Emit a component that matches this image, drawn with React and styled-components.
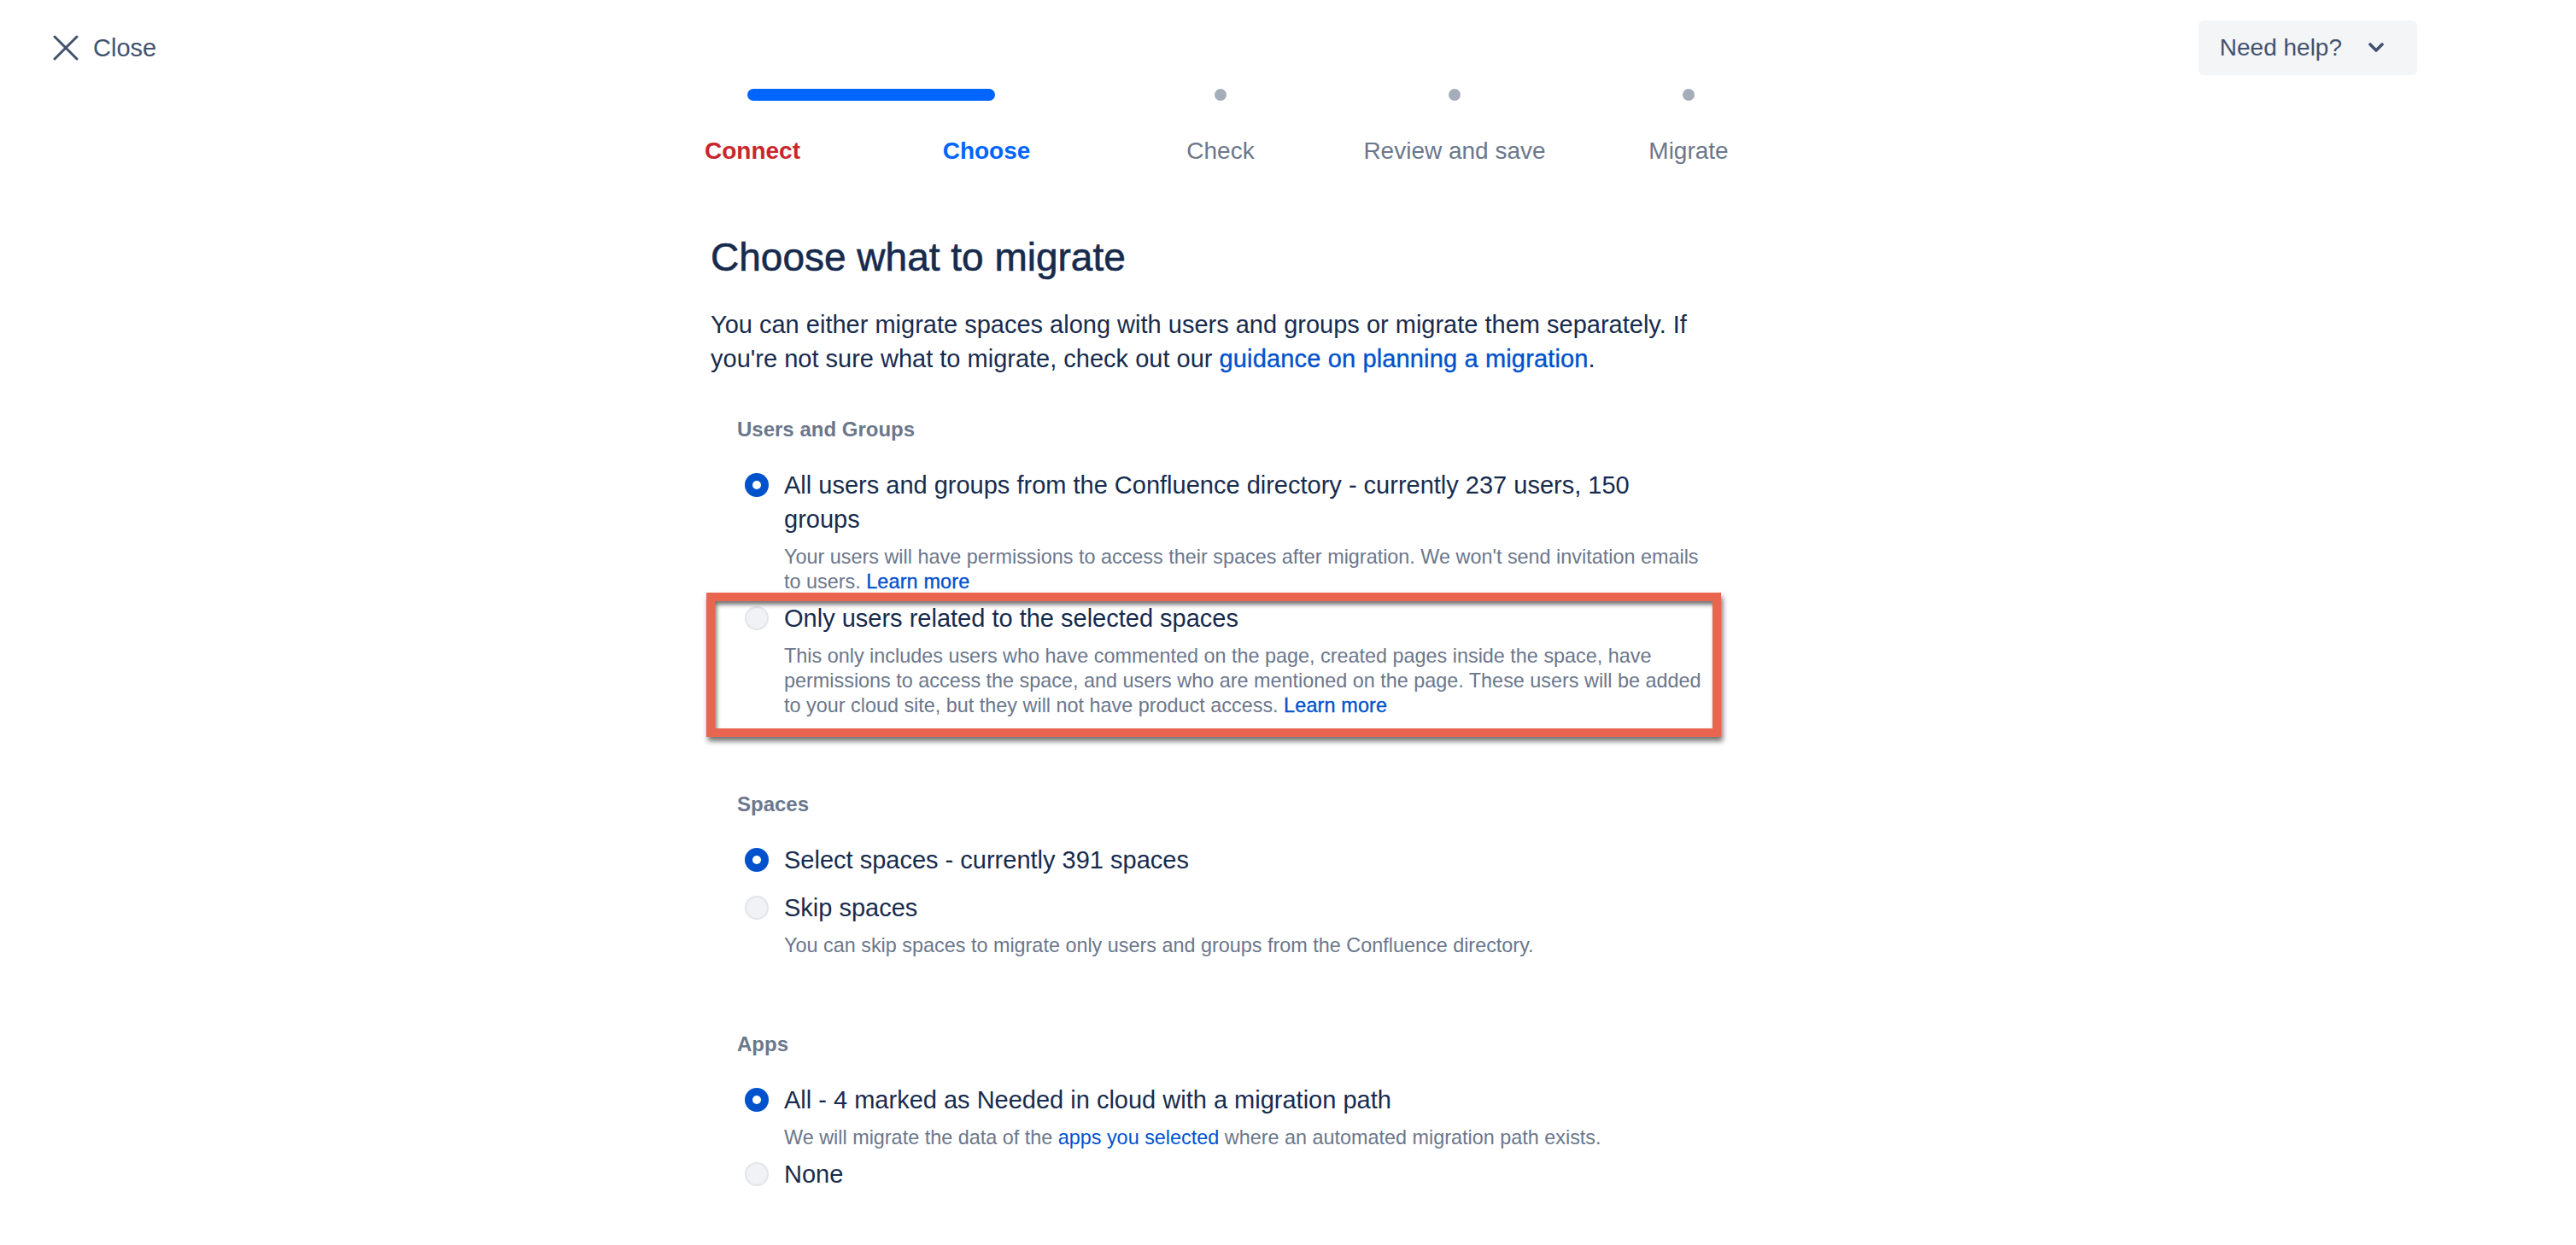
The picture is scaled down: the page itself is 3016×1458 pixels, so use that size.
import React from "react";
import styled, { createGlobalStyle } from "styled-components";

const GlobalStyle = createGlobalStyle`
  html, body { margin: 0; padding: 0; background: #ffffff; }
  body {
    font-family: "Liberation Sans", Arial, Helvetica, sans-serif;
    color: #172B4D;
    -webkit-font-smoothing: antialiased;
  }
  * { box-sizing: border-box; }
`;

const Page = styled.div`
  width: 3016px;
  min-height: 1458px;
  background: #ffffff;
`;

const TopBar = styled.header`
  display: flex;
  align-items: center;
  justify-content: space-between;
  height: 88px;
  padding: 24px 186px 0 62px;
`;

const CloseButton = styled.button`
  display: flex;
  align-items: center;
  gap: 17px;
  border: 0;
  background: transparent;
  padding: 0;
  font-family: inherit;
  font-size: 29px;
  color: #42526E;
  cursor: pointer;
`;

const HelpButton = styled.button`
  display: flex;
  align-items: center;
  height: 64px;
  padding: 0 24px 0 25px;
  border: 0;
  border-radius: 6px;
  background: #F4F5F7;
  font-family: inherit;
  font-size: 28px;
  color: #42526E;
  cursor: pointer;
`;

const IconBox = styled.span`
  display: inline-flex;
  align-items: center;
  justify-content: center;
  width: 48px;
  height: 48px;
  margin-left: 16px;
`;

const Stepper = styled.nav`
  width: 1370px;
  margin: 16px 0 0 744px;
`;

const Track = styled.div`
  display: grid;
  grid-template-columns: repeat(5, 1fr);
  align-items: center;
  height: 14px;
`;

const ProgressBar = styled.div`
  grid-column: 1 / 3;
  height: 14px;
  margin: 0 127px 0 131px;
  border-radius: 7px;
  background: #0065FF;
`;

const Dot = styled.span`
  justify-self: center;
  width: 14px;
  height: 14px;
  border-radius: 50%;
  background: #A5ADBA;
`;

const StepLabels = styled.div`
  display: grid;
  grid-template-columns: repeat(5, 1fr);
  margin-top: 39px;
`;

const StepLabel = styled.span`
  text-align: center;
  font-size: 28px;
  line-height: 40px;
  font-weight: ${(p) => (p.$state === "todo" ? 400 : 700)};
  color: ${(p) =>
    p.$state === "done" ? "#C9262C" : p.$state === "current" ? "#0065FF" : "#6B778C"};
`;

const Main = styled.main`
  width: 1164px;
  margin-left: 832px;
  padding-bottom: 60px;
`;

const Title = styled.h1`
  margin: 76px 0 0;
  font-size: 46px;
  line-height: 56px;
  font-weight: 500;
  color: #172B4D;
  -webkit-text-stroke: 0.6px #172B4D;
`;

const Intro = styled.p`
  margin: 31px 0 0;
  font-size: 29px;
  line-height: 40px;
  color: #172B4D;
`;

const Link = styled.a`
  color: #0052CC;
  text-decoration: none;
  ${(p) => (p.$medium ? "letter-spacing: 0.15px; -webkit-text-stroke: 0.35px #0052CC;" : "")}
`;

const Section = styled.section`
  margin-top: ${(p) => (p.$first ? "47px" : "85px")};
  padding-left: 31px;
`;

const SectionLabel = styled.h2`
  margin: 0 0 21px;
  font-size: 24px;
  line-height: 32px;
  font-weight: 700;
  color: #6B778C;
`;

const RadioList = styled.div`
  display: flex;
  flex-direction: column;
  padding-left: 9px;
`;

const RadioItem = styled.div`
  display: flex;
  align-items: flex-start;
  gap: 18px;
  padding: 8px 0;
`;

const RadioCircle = styled.span`
  flex: none;
  position: relative;
  width: 28px;
  height: 28px;
  margin-top: 6px;
  border-radius: 50%;
  background: ${(p) => (p.$checked ? "#0052CC" : "#F1F2F5")};
  border: ${(p) => (p.$checked ? "0" : "2px solid #E3E5EA")};
  &::after {
    content: "";
    display: ${(p) => (p.$checked ? "block" : "none")};
    position: absolute;
    left: 9px;
    top: 9px;
    width: 10px;
    height: 10px;
    border-radius: 50%;
    background: #ffffff;
  }
`;

const RadioLabel = styled.span`
  flex: 1;
  font-size: 29px;
  line-height: 40px;
  color: #172B4D;
`;

const Help = styled.p`
  margin: 2px 0 0;
  padding-left: 46px;
  font-size: 23.4px;
  line-height: 29px;
  color: #6B778C;
`;

const Highlight = styled.div`
  position: relative;
  &::after {
    content: "";
    position: absolute;
    top: -2px;
    left: -45px;
    right: -19px;
    bottom: -22px;
    border: 10px solid #EA6550;
    box-shadow: 2px 5px 6px rgba(0, 0, 0, 0.55), inset 2px 4px 5px rgba(0, 0, 0, 0.55);
    pointer-events: none;
  }
`;

const CloseIcon = () => (
  <svg width="30" height="30" viewBox="0 0 30 30" aria-hidden="true">
    <path d="M2 2 L28 28 M28 2 L2 28" stroke="#42526E" strokeWidth="3" strokeLinecap="round" fill="none" />
  </svg>
);

const ChevronDown = () => (
  <svg width="18" height="12" viewBox="0 0 18 12" aria-hidden="true">
    <path d="M2 2 L9 9 L16 2" stroke="#42526E" strokeWidth="3.6" strokeLinecap="round" strokeLinejoin="round" fill="none" />
  </svg>
);

const Radio = ({ checked, children, help }) => (
  <>
    <RadioItem>
      <RadioCircle $checked={checked} />
      <RadioLabel>{children}</RadioLabel>
    </RadioItem>
    {help && <Help>{help}</Help>}
  </>
);

const steps = [
  { label: "Connect", state: "done" },
  { label: "Choose", state: "current" },
  { label: "Check", state: "todo" },
  { label: "Review and save", state: "todo" },
  { label: "Migrate", state: "todo" },
];

export default function App() {
  return (
    <Page>
      <GlobalStyle />
      <TopBar>
        <CloseButton>
          <CloseIcon />
          Close
        </CloseButton>
        <HelpButton>
          Need help?
          <IconBox>
            <ChevronDown />
          </IconBox>
        </HelpButton>
      </TopBar>

      <Stepper>
        <Track>
          <ProgressBar />
          <Dot />
          <Dot />
          <Dot />
        </Track>
        <StepLabels>
          {steps.map((s) => (
            <StepLabel key={s.label} $state={s.state}>
              {s.label}
            </StepLabel>
          ))}
        </StepLabels>
      </Stepper>

      <Main>
        <Title>Choose what to migrate</Title>
        <Intro>
          You can either migrate spaces along with users and groups or migrate them separately. If
          you're not sure what to migrate, check out our{" "}
          <Link href="#" $medium>guidance on planning a migration</Link>.
        </Intro>

        <Section $first>
          <SectionLabel>Users and Groups</SectionLabel>
          <RadioList>
            <Radio
              checked
              help={
                <>
                  Your users will have permissions to access their spaces after migration. We won't
                  send invitation emails to users. <Link href="#" $medium>Learn more</Link>
                </>
              }
            >
              All users and groups from the Confluence directory - currently 237 users, 150 groups
            </Radio>
            <Highlight>
              <Radio
                help={
                  <>
                    This only includes users who have commented on the page, created pages inside the
                    space, have permissions to access the space, and users who are mentioned on the
                    page. These users will be added to your cloud site, but they will not have product
                    access. <Link href="#" $medium>Learn more</Link>
                  </>
                }
              >
                Only users related to the selected spaces
              </Radio>
            </Highlight>
          </RadioList>
        </Section>

        <Section>
          <SectionLabel>Spaces</SectionLabel>
          <RadioList>
            <Radio checked>Select spaces - currently 391 spaces</Radio>
            <Radio help="You can skip spaces to migrate only users and groups from the Confluence directory.">
              Skip spaces
            </Radio>
          </RadioList>
        </Section>

        <Section>
          <SectionLabel>Apps</SectionLabel>
          <RadioList>
            <Radio
              checked
              help={
                <>
                  We will migrate the data of the <Link href="#">apps you selected</Link> where an
                  automated migration path exists.
                </>
              }
            >
              All - 4 marked as Needed in cloud with a migration path
            </Radio>
            <Radio>None</Radio>
          </RadioList>
        </Section>
      </Main>
    </Page>
  );
}
